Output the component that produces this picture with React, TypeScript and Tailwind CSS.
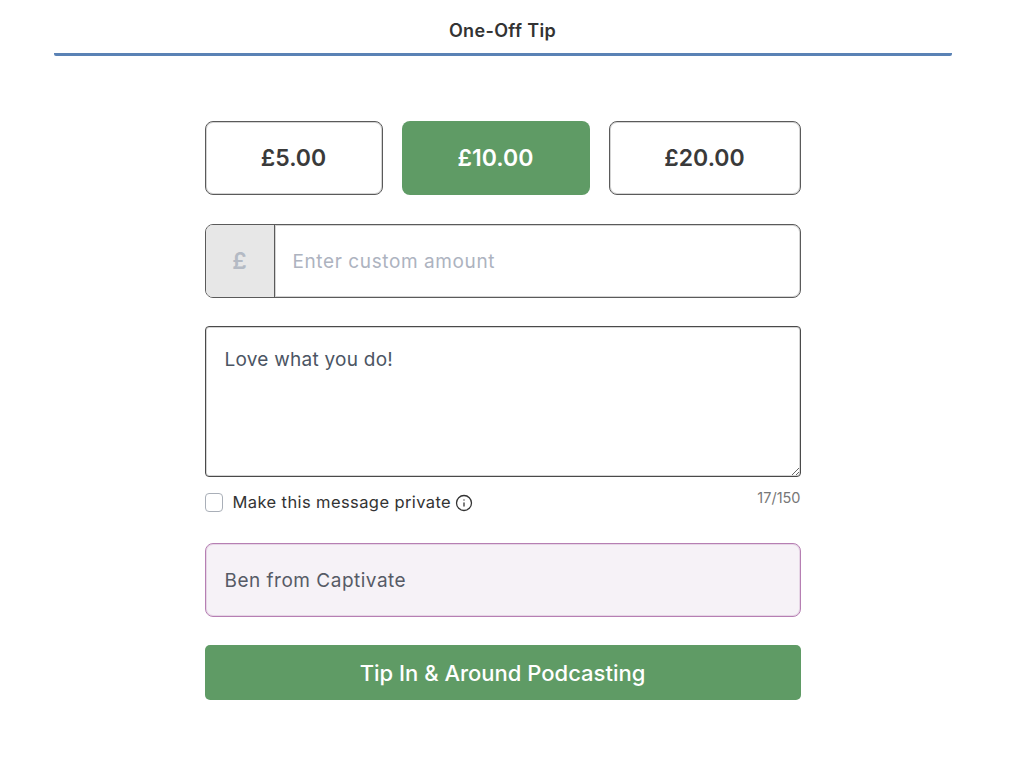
import { Info } from "lucide-react";

const fontClass = "font-['Inter','Liberation_Sans',sans-serif]";

const AmountButton = ({
  label,
  active,
  width,
}: {
  label: string;
  active?: boolean;
  width: string;
}) => (
  <button
    className={
      active
        ? `${width} h-[74px] rounded-lg bg-[#5f9b65] text-[23px] font-semibold text-white`
        : `${width} h-[74px] rounded-lg border border-[#5a5a5a] bg-white text-[23px] font-semibold text-[#3a3a3a] shadow-[inset_0_0_0_1px_#d4d4d4]`
    }
  >
    {label}
  </button>
);

export default function App() {
  return (
    <div className={`${fontClass} flex h-[758px] w-[1005px] flex-col items-center bg-white`}>
      <div className="flex h-[56px] w-[898px] items-start justify-center rounded-[2px] border-b-[3px] border-[#5a82b5] pt-[19px]">
        <h1 className="text-[18px] leading-[24px] font-semibold tracking-[0.35px] text-[#333]">One-Off Tip</h1>
      </div>

      <div className="mt-[65px] flex w-[596px] flex-col">
        <div className="flex gap-[19px]">
          <AmountButton label="£5.00" width="w-[178px]" />
          <AmountButton label="£10.00" width="w-[188px]" active />
          <AmountButton label="£20.00" width="w-[192px]" />
        </div>

        <div className="mt-[29px] flex h-[74px] overflow-hidden rounded-lg border border-[#5a5a5a] shadow-[inset_0_0_0_1px_#d4d4d4]">
          <div className="flex w-[69px] items-center justify-center border-r border-[#5a5a5a] bg-[#e7e7e7] text-[23px] font-semibold text-[#b4bac4] shadow-[1px_0_0_#d4d4d4]">
            £
          </div>
          <input
            placeholder="Enter custom amount"
            className="flex-1 bg-transparent px-[18px] pt-[2px] text-[19px] tracking-[0.6px] text-[#4b5563] outline-none placeholder:text-[#adb3bf]"
          />
        </div>

        <textarea
          defaultValue="Love what you do!"
          className="mt-[28px] block h-[151px] w-full rounded border border-[#4a4a4a] px-[19px] pt-[21px] pb-[20px] text-[19px] leading-[24px] tracking-[0.25px] text-[#4b5563] shadow-[inset_0_0_0_1px_#d4d4d4] outline-none"
        />

        <div className="mt-[7px] flex items-start justify-between">
          <label className="flex items-center pt-[9px]">
            <span className="h-[19px] w-[18px] rounded border border-[#a9afb8] bg-white" />
            <span className="ml-[10px] text-[16.5px] leading-[19px] tracking-[0.4px] text-[#333]">
              Make this message private
            </span>
            <Info className="ml-[4px] h-[18px] w-[18px] text-[#333]" strokeWidth={1.7} />
          </label>
          <span className="text-[14.5px] leading-[28px] text-[#777]">17/150</span>
        </div>

        <div className="mt-[31px] flex h-[74px] items-center rounded-lg border border-[#b67fb3] bg-[#f6f2f7] px-[19px] pt-[2px] text-[19px] tracking-[0.5px] text-[#565b66] shadow-[inset_0_0_0_1px_#e6d6e6]">
          Ben from Captivate
        </div>

        <button className="mt-[28px] h-[55px] rounded-[5px] bg-[#5f9b65] pt-[1px] text-[22px] font-medium text-white">
          Tip In &amp; Around Podcasting
        </button>
      </div>
    </div>
  );
}
